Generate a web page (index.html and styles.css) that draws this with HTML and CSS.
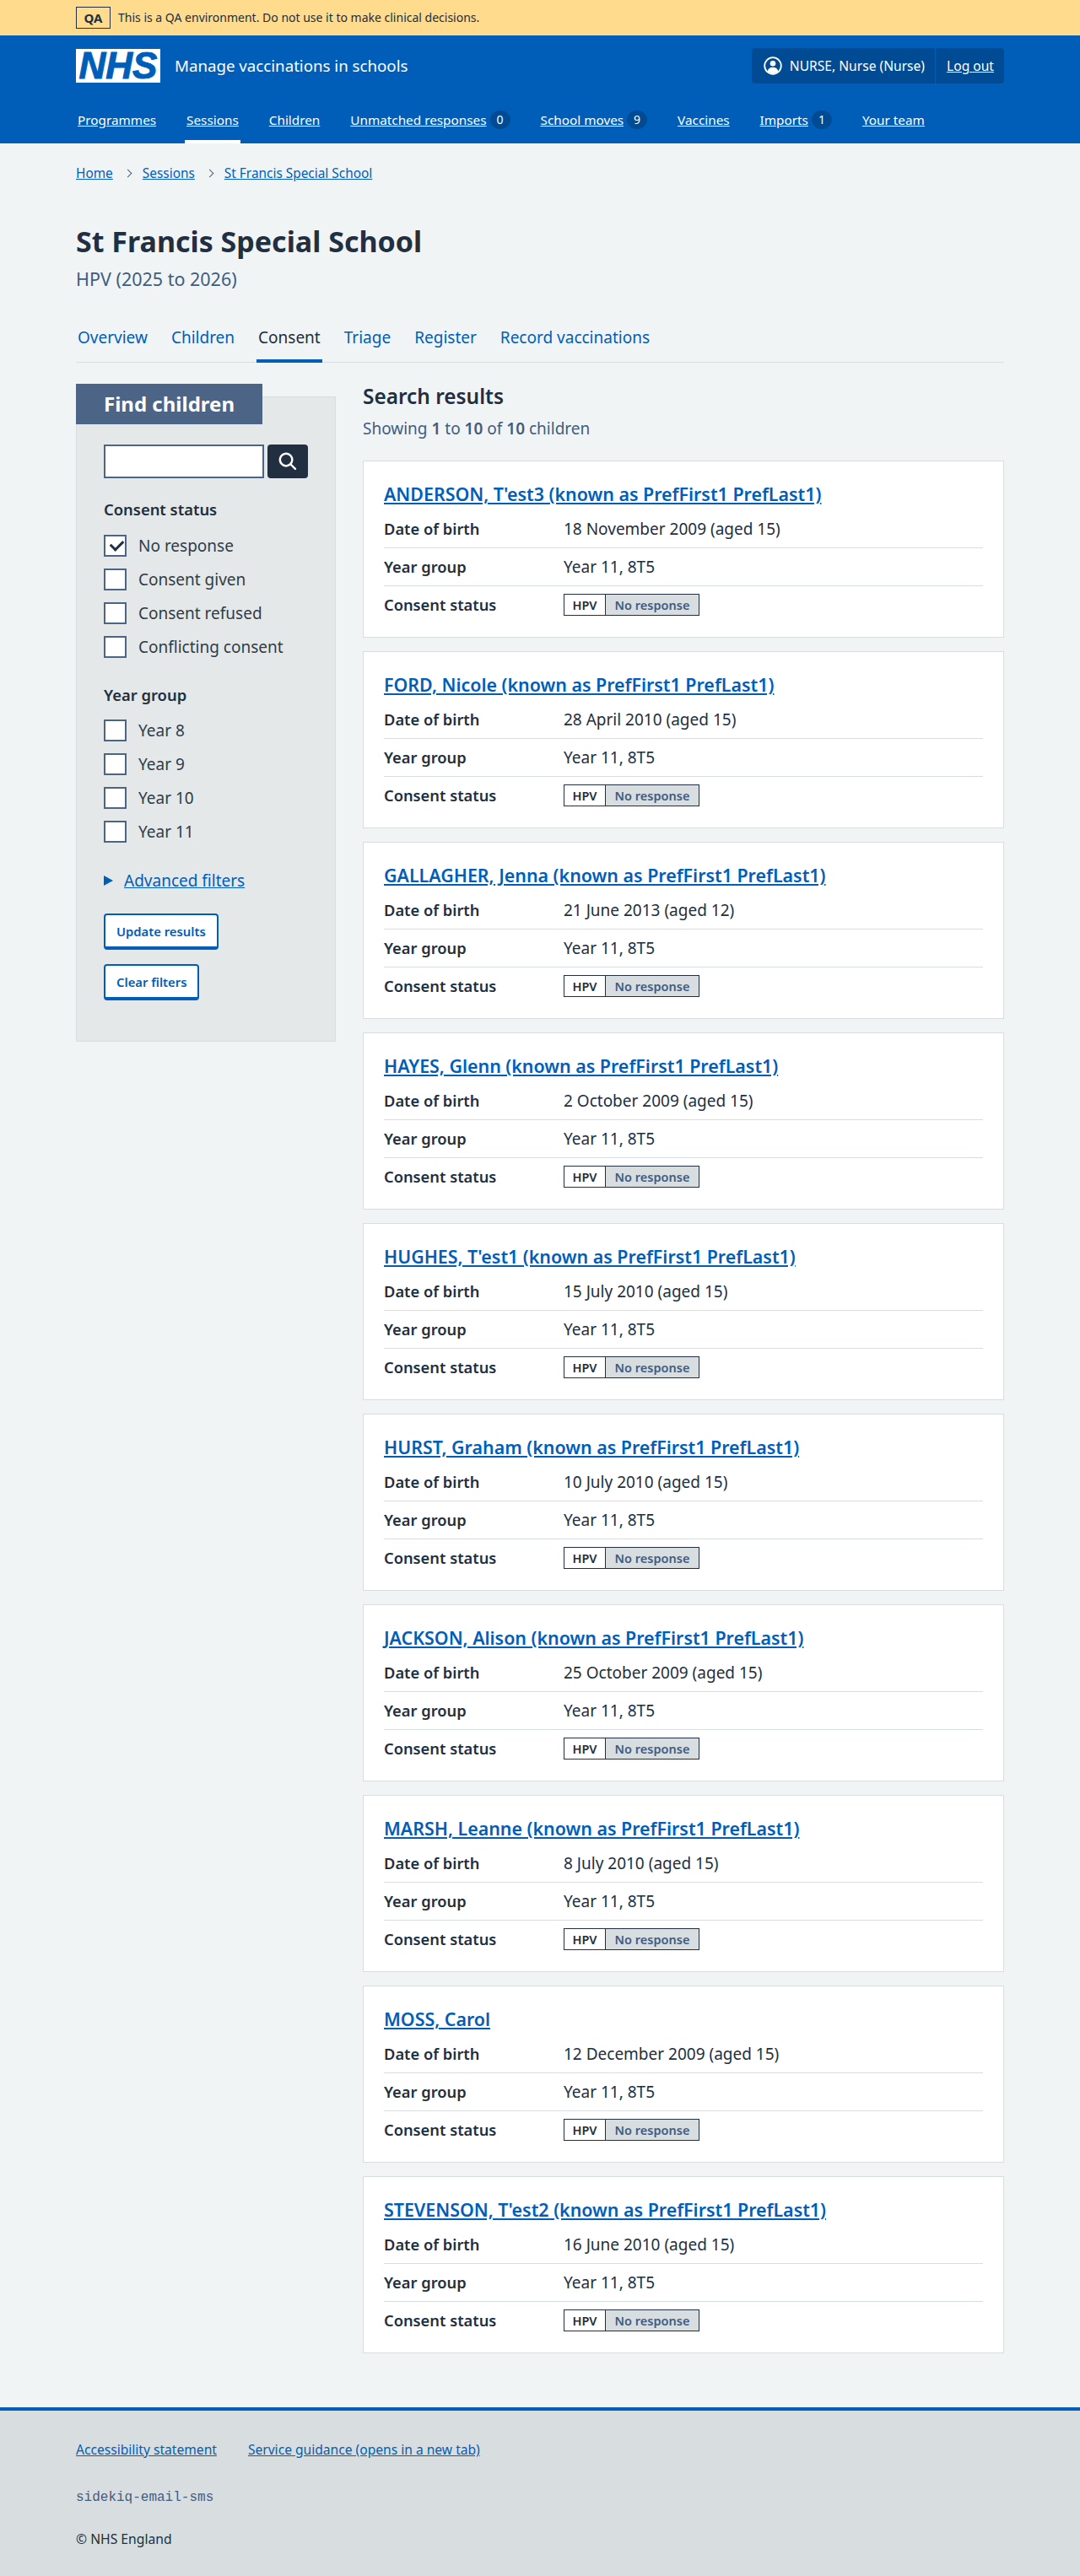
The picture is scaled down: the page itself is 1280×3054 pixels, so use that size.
FILE: index.html
```html
<!DOCTYPE html>
<html lang="en">
<head>
    <meta charset="UTF-8">
    <meta name="viewport" content="width=device-width, initial-scale=1.0">
    <title>Consent - St Francis Special School</title>
    <link rel="stylesheet" href="styles.css">
</head>
<body>
    <div class="env-banner">
        <div class="container env-inner">
            <strong class="env-tag">QA</strong>
            <span>This is a QA environment. Do not use it to make clinical decisions.</span>
        </div>
    </div>

    <header class="site-header">
        <div class="container header-top">
            <a class="logo" href="#">NHS</a>
            <span class="service-name">Manage vaccinations in schools</span>
            <div class="account">
                <div class="account-user">
                    <svg class="account-icon" viewBox="0 0 24 24" width="22" height="22" aria-hidden="true">
                        <circle cx="12" cy="12" r="10.7" fill="none" stroke="#fff" stroke-width="2"></circle>
                        <circle cx="12" cy="9" r="3.6" fill="#fff"></circle>
                        <path d="M5.2 19.4c.4-3.6 3-5.4 6.8-5.4s6.4 1.8 6.8 5.4a10 10 0 0 1-13.6 0z" fill="#fff"></path>
                    </svg>
                    <span>NURSE, Nurse (Nurse)</span>
                </div>
                <a class="account-link" href="#">Log out</a>
            </div>
        </div>
        <nav class="container main-nav">
            <a href="#">Programmes</a>
            <a href="#" class="active">Sessions</a>
            <a href="#">Children</a>
            <a href="#">Unmatched responses</a><span class="count">0</span>
            <a href="#">School moves</a><span class="count">9</span>
            <a href="#">Vaccines</a>
            <a href="#">Imports</a><span class="count">1</span>
            <a href="#">Your team</a>
        </nav>
    </header>

    <div class="container">
        <!-- Breadcrumbs -->
        <ol class="breadcrumbs">
            <li><a href="#">Home</a></li>
            <li><a href="#">Sessions</a></li>
            <li><a href="#">St Francis Special School</a></li>
        </ol>

        <h1 class="page-title">St Francis Special School</h1>
        <p class="page-caption">HPV (2025 to 2026)</p>

        <!-- Secondary navigation -->
        <nav class="tabs">
            <a href="#">Overview</a>
            <a href="#">Children</a>
            <a href="#" class="active">Consent</a>
            <a href="#">Triage</a>
            <a href="#">Register</a>
            <a href="#">Record vaccinations</a>
        </nav>

        <main class="columns">
            <aside class="filters">
                <h2 class="filters-title">Find children</h2>
                <div class="filters-body">
                    <div class="search">
                        <input class="search-input" type="text" aria-label="Search">
                        <button class="search-button" aria-label="Search">
                            <svg viewBox="0 0 24 24" width="29" height="29" aria-hidden="true">
                                <path d="M19.71 18.29l-4.11-4.1a7 7 0 1 0-1.41 1.41l4.1 4.11a1 1 0 0 0 1.42 0 1 1 0 0 0 0-1.42zM5 10a5 5 0 1 1 5 5 5 5 0 0 1-5-5z" fill="#fff"></path>
                            </svg>
                        </button>
                    </div>

                    <h3 class="filter-label">Consent status</h3>
                    <label class="check"><input type="checkbox" checked><span class="box"></span>No response</label>
                    <label class="check"><input type="checkbox"><span class="box"></span>Consent given</label>
                    <label class="check"><input type="checkbox"><span class="box"></span>Consent refused</label>
                    <label class="check"><input type="checkbox"><span class="box"></span>Conflicting consent</label>

                    <h3 class="filter-label year-label">Year group</h3>
                    <label class="check"><input type="checkbox"><span class="box"></span>Year 8</label>
                    <label class="check"><input type="checkbox"><span class="box"></span>Year 9</label>
                    <label class="check"><input type="checkbox"><span class="box"></span>Year 10</label>
                    <label class="check"><input type="checkbox"><span class="box"></span>Year 11</label>

                    <div class="advanced">
                        <span class="advanced-arrow"></span>
                        <a href="#">Advanced filters</a>
                    </div>

                    <button class="btn">Update results</button>
                    <button class="btn">Clear filters</button>
                </div>
            </aside>

            <section class="results">
                <h2 class="results-title">Search results</h2>
                <p class="results-count">Showing <b>1</b> to <b>10</b> of <b>10</b> children</p>

                <article class="card">
                    <h3><a href="#">ANDERSON, T'est3 (known as PrefFirst1 PrefLast1)</a></h3>
                    <dl>
                        <div class="row"><dt>Date of birth</dt><dd>18 November 2009 (aged 15)</dd></div>
                        <div class="row"><dt>Year group</dt><dd>Year 11, 8T5</dd></div>
                        <div class="row"><dt>Consent status</dt><dd><span class="tag"><b>HPV</b><i>No response</i></span></dd></div>
                    </dl>
                </article>

                <article class="card">
                    <h3><a href="#">FORD, Nicole (known as PrefFirst1 PrefLast1)</a></h3>
                    <dl>
                        <div class="row"><dt>Date of birth</dt><dd>28 April 2010 (aged 15)</dd></div>
                        <div class="row"><dt>Year group</dt><dd>Year 11, 8T5</dd></div>
                        <div class="row"><dt>Consent status</dt><dd><span class="tag"><b>HPV</b><i>No response</i></span></dd></div>
                    </dl>
                </article>

                <article class="card">
                    <h3><a href="#">GALLAGHER, Jenna (known as PrefFirst1 PrefLast1)</a></h3>
                    <dl>
                        <div class="row"><dt>Date of birth</dt><dd>21 June 2013 (aged 12)</dd></div>
                        <div class="row"><dt>Year group</dt><dd>Year 11, 8T5</dd></div>
                        <div class="row"><dt>Consent status</dt><dd><span class="tag"><b>HPV</b><i>No response</i></span></dd></div>
                    </dl>
                </article>

                <article class="card">
                    <h3><a href="#">HAYES, Glenn (known as PrefFirst1 PrefLast1)</a></h3>
                    <dl>
                        <div class="row"><dt>Date of birth</dt><dd>2 October 2009 (aged 15)</dd></div>
                        <div class="row"><dt>Year group</dt><dd>Year 11, 8T5</dd></div>
                        <div class="row"><dt>Consent status</dt><dd><span class="tag"><b>HPV</b><i>No response</i></span></dd></div>
                    </dl>
                </article>

                <article class="card">
                    <h3><a href="#">HUGHES, T'est1 (known as PrefFirst1 PrefLast1)</a></h3>
                    <dl>
                        <div class="row"><dt>Date of birth</dt><dd>15 July 2010 (aged 15)</dd></div>
                        <div class="row"><dt>Year group</dt><dd>Year 11, 8T5</dd></div>
                        <div class="row"><dt>Consent status</dt><dd><span class="tag"><b>HPV</b><i>No response</i></span></dd></div>
                    </dl>
                </article>

                <article class="card">
                    <h3><a href="#">HURST, Graham (known as PrefFirst1 PrefLast1)</a></h3>
                    <dl>
                        <div class="row"><dt>Date of birth</dt><dd>10 July 2010 (aged 15)</dd></div>
                        <div class="row"><dt>Year group</dt><dd>Year 11, 8T5</dd></div>
                        <div class="row"><dt>Consent status</dt><dd><span class="tag"><b>HPV</b><i>No response</i></span></dd></div>
                    </dl>
                </article>

                <article class="card">
                    <h3><a href="#">JACKSON, Alison (known as PrefFirst1 PrefLast1)</a></h3>
                    <dl>
                        <div class="row"><dt>Date of birth</dt><dd>25 October 2009 (aged 15)</dd></div>
                        <div class="row"><dt>Year group</dt><dd>Year 11, 8T5</dd></div>
                        <div class="row"><dt>Consent status</dt><dd><span class="tag"><b>HPV</b><i>No response</i></span></dd></div>
                    </dl>
                </article>

                <article class="card">
                    <h3><a href="#">MARSH, Leanne (known as PrefFirst1 PrefLast1)</a></h3>
                    <dl>
                        <div class="row"><dt>Date of birth</dt><dd>8 July 2010 (aged 15)</dd></div>
                        <div class="row"><dt>Year group</dt><dd>Year 11, 8T5</dd></div>
                        <div class="row"><dt>Consent status</dt><dd><span class="tag"><b>HPV</b><i>No response</i></span></dd></div>
                    </dl>
                </article>

                <article class="card">
                    <h3><a href="#">MOSS, Carol</a></h3>
                    <dl>
                        <div class="row"><dt>Date of birth</dt><dd>12 December 2009 (aged 15)</dd></div>
                        <div class="row"><dt>Year group</dt><dd>Year 11, 8T5</dd></div>
                        <div class="row"><dt>Consent status</dt><dd><span class="tag"><b>HPV</b><i>No response</i></span></dd></div>
                    </dl>
                </article>

                <article class="card">
                    <h3><a href="#">STEVENSON, T'est2 (known as PrefFirst1 PrefLast1)</a></h3>
                    <dl>
                        <div class="row"><dt>Date of birth</dt><dd>16 June 2010 (aged 15)</dd></div>
                        <div class="row"><dt>Year group</dt><dd>Year 11, 8T5</dd></div>
                        <div class="row"><dt>Consent status</dt><dd><span class="tag"><b>HPV</b><i>No response</i></span></dd></div>
                    </dl>
                </article>
            </section>
        </main>
    </div>

    <footer class="site-footer">
        <div class="container">
            <div class="footer-links">
                <a href="#">Accessibility statement</a>
                <a href="#">Service guidance (opens in a new tab)</a>
            </div>
            <p class="footer-build">sidekiq-email-sms</p>
            <p class="footer-copy">© NHS England</p>
        </div>
    </footer>
</body>
</html>
```

FILE: styles.css
```css
* {
    box-sizing: border-box;
}

body {
    margin: 0;
    font-family: "Noto Sans", Arial, sans-serif;
    font-size: 19px;
    line-height: 24px;
    color: #212f40;
    background-color: #f0f4f5;
}

a {
    color: #005eb8;
}

.container {
    width: 1100px;
    margin: 0 auto;
}

/* Environment banner */
.env-banner {
    background-color: #ffdb8d;
    height: 42px;
    font-size: 14px;
}

.env-inner {
    display: flex;
    align-items: center;
    gap: 9px;
    height: 42px;
}

.env-tag {
    border: 1px solid #212f40;
    width: 41px;
    height: 26px;
    line-height: 24px;
    text-align: center;
    font-size: 15px;
}

/* Header */
.site-header {
    background-color: #005eb8;
    color: white;
    height: 128px;
}

.header-top {
    display: flex;
    align-items: center;
    padding-top: 15px;
    height: 57px;
}

.logo {
    background-color: white;
    color: #005eb8;
    width: 100px;
    height: 40px;
    font: italic bold 44px/40px "Liberation Sans", Arial, sans-serif;
    -webkit-text-stroke: 1px #005eb8;
    text-decoration: none;
    text-align: center;
}

.service-name {
    margin-left: 17px;
    font-size: 18.7px;
}

.account {
    margin-left: auto;
    display: flex;
    align-items: center;
    height: 42px;
    background-color: #004b93;
    border-radius: 4px;
    font-size: 15.6px;
}

.account-user {
    display: flex;
    align-items: center;
    gap: 9px;
    height: 42px;
    padding: 0 12px 0 14px;
    border-right: 1px solid #005eb8;
}

.account-link {
    color: white;
    padding: 0 12px 0 13px;
}

.main-nav {
    display: flex;
    align-items: center;
    height: 71px;
    padding-top: 15px;
    padding-left: 2px;
    font-size: 15.3px;
}

.main-nav a {
    color: white;
    margin-right: 36px;
    position: relative;
}

.main-nav a:has(+ .count) {
    margin-right: 4px;
}

.main-nav a.active::after {
    content: "";
    position: absolute;
    left: -2px;
    right: -2px;
    bottom: -16px;
    height: 4px;
    background-color: white;
}

.count {
    width: 24px;
    height: 22px;
    line-height: 22px;
    border-radius: 50%;
    background-color: #004b93;
    text-align: center;
    font-size: 14px;
    margin-right: 36px;
}

/* Breadcrumbs */
.breadcrumbs {
    display: flex;
    list-style-type: none;
    margin: 0;
    padding: 24px 0 0;
    font-size: 15.4px;
}

.breadcrumbs li + li::before {
    content: "";
    display: inline-block;
    width: 6px;
    height: 6px;
    margin: 0 14px 2px 14px;
    border-top: 1px solid #4c6272;
    border-right: 1px solid #4c6272;
    transform: rotate(45deg);
}

.page-title {
    margin: 48px 0 0;
    font-size: 34px;
    line-height: 40px;
    font-weight: 700;
}

.page-caption {
    margin: 11px 0 0;
    font-size: 21.5px;
    line-height: 28px;
    color: #425c80;
}

/* Tabs */
.tabs {
    display: flex;
    gap: 24px;
    margin-top: 31px;
    height: 54px;
    border-bottom: 1px solid #d8dde0;
    font-size: 19px;
    line-height: 28px;
}

.tabs a {
    height: 54px;
    padding: 10px 2px 0;
    text-decoration: none;
}

.tabs a.active {
    color: #212f40;
    border-bottom: 4px solid #005eb8;
}

.columns {
    display: flex;
    align-items: flex-start;
    gap: 32px;
    margin-top: 25px;
}

/* Filters sidebar */
.filters {
    width: 308px;
    flex: none;
}

.filters-title {
    width: 221px;
    height: 48px;
    margin: 0;
    padding-left: 33px;
    background-color: #4c6586;
    color: white;
    font-size: 24px;
    line-height: 48px;
    font-weight: 700;
    position: relative;
}

.filters-body {
    margin-top: -33px;
    height: 765px;
    padding: 56px 32px 0;
    background-color: #e4e8e8;
    border: 1px solid #d8dde0;
}

.search {
    display: flex;
    gap: 4px;
    height: 40px;
}

.search-input {
    width: 190px;
    height: 40px;
    border: 2px solid #4c6586;
    background-color: white;
}

.search-button {
    width: 48px;
    height: 40px;
    border: none;
    border-radius: 4px;
    background-color: #212f40;
    padding: 0;
    display: flex;
    align-items: center;
    justify-content: center;
}

.filter-label {
    margin: 25px 0 11px;
    font-size: 18.4px;
    line-height: 24px;
    font-weight: 600;
}

.year-label {
    margin-bottom: 10px;
}

.check {
    display: flex;
    align-items: center;
    height: 40px;
    color: #2f3d4a;
}

.check input {
    display: none;
}

.box {
    width: 27px;
    height: 26px;
    margin-right: 14px;
    border: 2px solid #4c6586;
    background-color: white;
    position: relative;
}

.check input:checked + .box::after {
    content: "";
    position: absolute;
    left: 6px;
    top: 4px;
    width: 12px;
    height: 7px;
    border-left: 3px solid #212f40;
    border-bottom: 3px solid #212f40;
    transform: rotate(-45deg);
}

.advanced {
    display: flex;
    align-items: center;
    gap: 13px;
    margin-top: 26px;
}

.advanced-arrow {
    width: 0;
    height: 0;
    border-left: 11px solid #005eb8;
    border-top: 6.5px solid transparent;
    border-bottom: 6.5px solid transparent;
}

.btn {
    display: block;
    height: 43px;
    margin-top: 27px;
    padding: 0 13px;
    background-color: white;
    color: #005eb8;
    border: 2px solid #005eb8;
    border-bottom-width: 4px;
    border-radius: 4px;
    font-family: inherit;
    font-size: 14.8px;
    font-weight: 600;
}

.btn + .btn {
    margin-top: 17px;
}

/* Results */
.results {
    flex: 1;
    min-width: 0;
}

.results-title {
    margin: 0;
    font-size: 24.4px;
    line-height: 30px;
    font-weight: 600;
}

.results-count {
    margin: 9px 0 0;
    line-height: 28px;
    color: #425c80;
}

.results-count b {
    font-weight: 600;
}

.card {
    background-color: white;
    border: 1px solid #d8dde0;
    height: 210px;
    margin: 0 0 16px;
    padding: 24px;
}

.results-count + .card {
    margin-top: 24px;
}

.card:last-child {
    margin-bottom: 0;
}

.card h3 {
    margin: 0;
    font-size: 21.4px;
    line-height: 30px;
    font-weight: 600;
}

dl {
    margin: 4px 0 0;
}

.row {
    display: flex;
    height: 45px;
    padding-top: 10px;
    border-bottom: 1px solid #d8dde0;
}

.row:last-child {
    border-bottom: none;
}

dt {
    width: 213px;
    font-size: 18.3px;
    font-weight: 600;
}

dd {
    margin: 0;
}

.tag {
    display: inline-flex;
    height: 26px;
    margin-top: -1px;
    border: 1px solid #212f40;
    font-size: 14.5px;
    line-height: 24px;
    vertical-align: top;
}

.tag b {
    width: 49px;
    text-align: center;
    font-weight: 600;
    border-right: 1px solid #212f40;
}

.tag i {
    width: 110px;
    text-align: center;
    font-style: normal;
    font-weight: 600;
    background-color: #d8dde0;
    color: #425c80;
}

/* Footer */
.site-footer {
    margin-top: 64px;
    height: 200px;
    background-color: #d8dde0;
    border-top: 4px solid #005eb8;
}

.footer-links {
    display: flex;
    gap: 37px;
    padding-top: 34px;
    font-size: 15.6px;
}

.footer-build {
    margin: 33px 0 0;
    font-family: "Liberation Mono", monospace;
    font-size: 16px;
    color: #425c80;
}

.footer-copy {
    margin: 25px 0 0;
    font-size: 15.7px;
}
```
